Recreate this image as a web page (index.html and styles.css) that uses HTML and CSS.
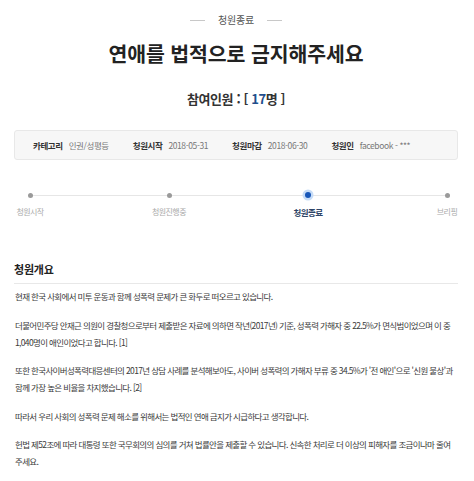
FILE: index.html
```html
<!DOCTYPE html>
<html lang="ko">
<head>
<meta charset="utf-8">
<title>연애를 법적으로 금지해주세요</title>
<link rel="stylesheet" href="styles.css">
</head>
<body>
<div class="page">
  <div class="status"><span class="dash"></span><span class="status-text">청원종료</span><span class="dash"></span></div>
  <h1 class="title">연애를 법적으로 금지해주세요</h1>
  <div class="count">참여인원 : [ <span class="num">17</span>명 ]</div>

  <ul class="info">
    <li class="info-item"><span class="info-label">카테고리</span><span class="info-value">인권/성평등</span></li>
    <li class="info-item"><span class="info-label">청원시작</span><span class="info-value">2018-05-31</span></li>
    <li class="info-item"><span class="info-label">청원마감</span><span class="info-value">2018-06-30</span></li>
    <li class="info-item"><span class="info-label">청원인</span><span class="info-value">facebook - ***</span></li>
  </ul>

  <div class="progress">
    <div class="step"><span class="dot"></span><span class="step-label">청원시작</span></div>
    <div class="step"><span class="dot"></span><span class="step-label">청원진행중</span></div>
    <div class="step active"><span class="dot"></span><span class="step-label">청원종료</span></div>
    <div class="step"><span class="dot"></span><span class="step-label">브리핑</span></div>
  </div>

  <h2 class="section">청원개요</h2>
  <div class="content">
    <p>현재 한국 사회에서 미투 운동과 함께 성폭력 문제가 큰 화두로 떠오르고 있습니다.</p>
    <p>더불어민주당 안재근 의원이 경찰청으로부터 제출받은 자료에 의하면 작년(2017년) 기준, 성폭력 가해자 중 22.5%가 면식범이었으며 이 중 1,040명이 애인이었다고 합니다. [1]</p>
    <p>또한 한국사이버성폭력대응센터의 2017년 상담 사례를 분석해보아도, 사이버 성폭력의 가해자 부류 중 34.5%가 '전 애인'으로 '신원 불상'과 함께 가장 높은 비율을 차지했습니다. [2]</p>
    <p>따라서 우리 사회의 성폭력 문제 해소를 위해서는 법적인 연애 금지가 시급하다고 생각합니다.</p>
    <p>헌법 제52조에 따라 대통령 또한 국무회의의 심의를 거쳐 법률안을 제출할 수 있습니다. 신속한 처리로 더 이상의 피해자를 조금이나마 줄여 주세요.</p>
  </div>
</div>
</body>
</html>
```

FILE: styles.css
```css
* { box-sizing: border-box; }
html, body { margin: 0; padding: 0; background: #fff; }
body {
  font-family: "Noto Sans CJK KR", "Noto Sans", sans-serif;
  color: #333;
}
.page {
  width: 444px;
  margin-left: 14px;
}
.status {
  padding-top: 13px;
  display: flex;
  justify-content: center;
  align-items: center;
  gap: 13px;
  font-size: 10px;
  line-height: 14px;
  color: #555;
  letter-spacing: -0.2px;
}
.dash {
  width: 15px;
  height: 1px;
  background: #c8c8c8;
}
.title {
  margin: 14px 0 0;
  text-align: center;
  font-size: 20.5px;
  line-height: 24px;
  font-weight: 700;
  letter-spacing: -0.1px;
  color: #222;
}
.count {
  margin-top: 26px;
  text-align: center;
  font-size: 13px;
  line-height: 16px;
  font-weight: 700;
  letter-spacing: -0.4px;
  color: #333;
}
.count .num { color: #1f4e8c; }
.info {
  list-style: none;
  margin: 23px 0 0;
  padding: 0 0 0 18px;
  height: 30px;
  display: flex;
  align-items: center;
  gap: 24px;
  background: #f7f7f7;
  border: 1px solid #e8e8e8;
  border-radius: 3px;
  font-size: 8.5px;
  letter-spacing: -0.4px;
}
.info-item { display: flex; gap: 6px; }
.info-label { font-weight: 700; color: #333; }
.info-value { color: #777; }
.progress {
  position: relative;
  margin: 29px -5px 0 0;
  padding: 0 1px;
  display: flex;
  justify-content: space-between;
}
.progress::before {
  content: "";
  position: absolute;
  left: 16px;
  right: 16px;
  top: 6px;
  height: 1px;
  background: #e6e6e6;
}
.step {
  width: 30px;
  display: flex;
  flex-direction: column;
  align-items: center;
  position: relative;
}
.dot {
  width: 12px;
  height: 12px;
  display: flex;
  align-items: center;
  justify-content: center;
}
.dot::after {
  content: "";
  width: 5px;
  height: 5px;
  border-radius: 50%;
  background: #9a9a9a;
}
.step.active .dot::after {
  width: 6px;
  height: 6px;
  background: #1756b8;
  box-shadow: 0 0 0 2.5px #c6dcf7;
}
.step-label {
  margin-top: 5px;
  white-space: nowrap;
  font-size: 8px;
  line-height: 12px;
  letter-spacing: -0.6px;
  color: #aaa;
}
.step.active .step-label {
  font-size: 8.5px;
  font-weight: 700;
  color: #2d4466;
}
.section {
  margin: 44px 0 0;
  padding-bottom: 7px;
  border-bottom: 1px solid #e8e8e8;
  font-size: 11px;
  line-height: 14px;
  font-weight: 700;
  letter-spacing: -0.2px;
  color: #222;
}
.content {
  padding-top: 4px;
  font-size: 8.5px;
  line-height: 17px;
  letter-spacing: -0.65px;
  color: #3a3a3a;
}
.content p {
  margin: 0 0 11.5px;
  padding-left: 1px;
}
```
